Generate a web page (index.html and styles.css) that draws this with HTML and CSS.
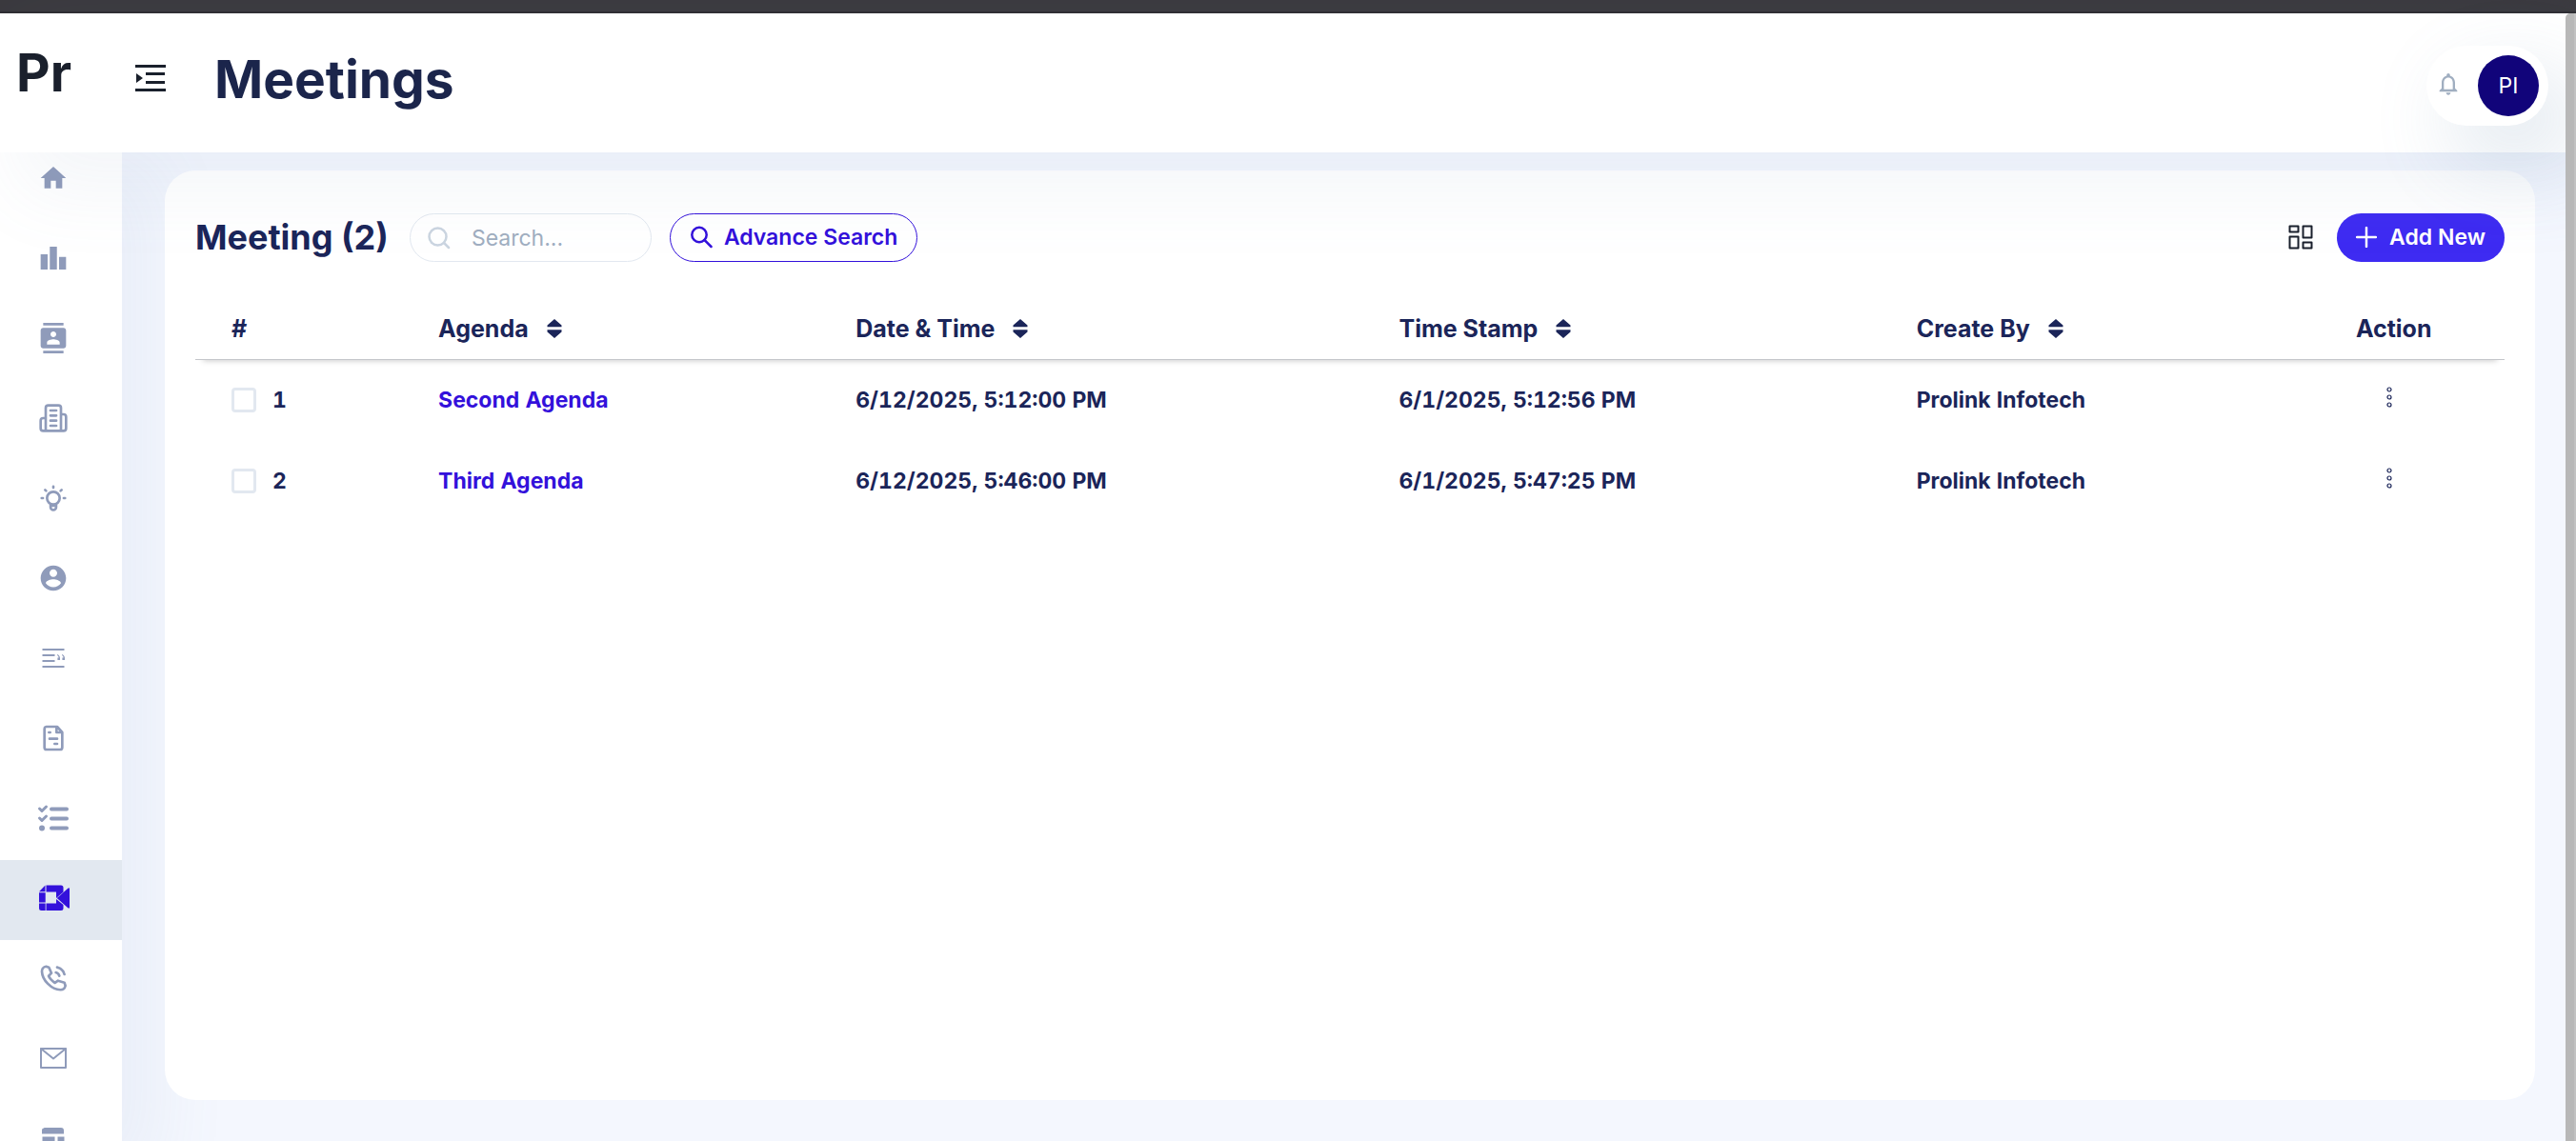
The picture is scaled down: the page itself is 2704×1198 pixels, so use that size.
FILE: index.html
```
<!DOCTYPE html>
<html lang="en">
<head>
<meta charset="utf-8">
<title>Meetings</title>
<meta name="viewport" content="width=device-width, initial-scale=1">
<link rel="stylesheet" href="styles.css">
</head>
<body>
<svg class="sprite" aria-hidden="true">
  <symbol id="sort" viewBox="0 0 16 20"><path d="M8 0 15.500 6.500V8.300H.5V6.500ZM8 20 15.500 13.500V11.200H.5v2.300Z"/></symbol>
  <symbol id="dots" viewBox="0 0 6 22"><g fill="none" stroke="currentColor" stroke-width="1.2"><circle cx="3" cy="3" r="2"/><circle cx="3" cy="11" r="2"/><circle cx="3" cy="19" r="2"/></g></symbol>
</svg>
<div class="window-edge"></div>
<header class="topbar">
  <a class="brand" href="#">Pr</a>
  <button class="menu-toggle" type="button" aria-label="Toggle menu">
    <svg width="32" height="28" viewBox="0 0 32 28"><path d="M0 0h32v3H0zM11 8h20v3H11zM11 17h20v3H11zM0 25h32v3H0zM1 9l7 5-7 5z"/></svg>
  </button>
  <h1>Meetings</h1>
  <div class="account">
    <button class="bell" type="button" aria-label="Notifications">
      <svg width="28" height="28" viewBox="0 0 24 24"><path d="M12 22c1.100 0 2-.9 2-2h-4c0 1.100.9 2 2 2zm6-6v-5c0-3.070-1.630-5.640-4.500-6.320V4c0-.83-.67-1.500-1.500-1.500s-1.500.67-1.500 1.500v.68C7.640 5.360 6 7.920 6 11v5l-2 2v1h16v-1l-2-2zm-2 1H8v-6c0-2.480 1.510-4.500 4-4.500s4 2.020 4 4.500v6z"/></svg>
    </button>
    <button class="avatar" type="button">PI</button>
  </div>
</header>
<div class="shell">
  <nav class="sidebar" aria-label="Main">
    <a href="#" aria-label="Home"><svg viewBox="0 0 24 24"><path d="M10 20v-6h4v6h5v-8h3L12 3 2 12h3v8z"/></svg></a>
    <a href="#" aria-label="Reports"><svg viewBox="0 0 24 24"><path d="M2 9h5.500v12H2zM9.200 3h5.600v18H9.200zM16.500 11H22v10h-5.500z"/></svg></a>
    <a href="#" aria-label="Contacts"><svg viewBox="0 0 24 24"><path d="M20 0H4v2h16V0zM4 24h16v-2H4v2zM20 4H4c-1.100 0-2 .9-2 2v12c0 1.100.9 2 2 2h16c1.100 0 2-.9 2-2V6c0-1.100-.9-2-2-2zm-8 2.750c1.240 0 2.250 1.010 2.250 2.250s-1.010 2.250-2.250 2.250S9.750 10.240 9.750 9 10.760 6.750 12 6.750zM17 17H7v-1.500c0-1.670 3.330-2.500 5-2.500s5 .83 5 2.500V17z"/></svg></a>
    <a href="#" aria-label="Properties"><svg viewBox="0 0 24 24" class="line"><path d="M6 22V4a2 2 0 0 1 2-2h8a2 2 0 0 1 2 2v18ZM6 12H4a2 2 0 0 0-2 2v6a2 2 0 0 0 2 2h2M18 9h2a2 2 0 0 1 2 2v9a2 2 0 0 1-2 2h-2M9.700 6h4.600M9.700 10h4.600M9.700 14h4.600M9.700 18h4.600"/></svg></a>
    <a href="#" aria-label="Opportunities"><svg viewBox="0 0 24 24" class="line"><circle cx="12" cy="12" r="5"/><path d="M9.800 17v2.200a2.200 2.200 0 0 0 4.400 0V17M9.800 18h4.400M12 2.800v1M2.800 12h1M20.200 12h1M5.500 5.500l.8.8M18.500 5.500l-.8.800"/></svg></a>
    <a href="#" aria-label="Accounts"><svg viewBox="0 0 24 24"><path d="M12 2C6.480 2 2 6.480 2 12s4.480 10 10 10 10-4.480 10-10S17.520 2 12 2zm0 3c1.660 0 3 1.340 3 3s-1.340 3-3 3-3-1.340-3-3 1.340-3 3-3zm0 14.200c-2.500 0-4.710-1.280-6-3.220.03-1.990 4-3.080 6-3.080 1.990 0 5.970 1.090 6 3.080-1.290 1.940-3.500 3.220-6 3.220z"/></svg></a>
    <a href="#" aria-label="Quotes"><svg viewBox="0 0 32 32"><path d="M4.500 6h23v2h-23zM4.500 12h13v2h-13zM4.500 18h13v2h-13zM4.500 24h23v2h-23z"/><path d="M20 12q3.500 1 3 6h-2.600v-2.500h1.200q0-1.800-1.600-2.400zM25 12q3.500 1 3 6h-2.600v-2.500h1.200q0-1.800-1.600-2.400z"/></svg></a>
    <a href="#" aria-label="Invoices"><svg viewBox="0 0 24 24" class="line"><path d="M15 3H6.500A1.700 1.700 0 0 0 5 4.700v14.600A1.700 1.700 0 0 0 6.700 21h10.600a1.700 1.700 0 0 0 1.700-1.700V7.500ZM14.500 3v4.500H19M8.500 7.500h1M9 12.500h6M13 16.500h2"/></svg></a>
    <a href="#" aria-label="Tasks"><svg viewBox="0 0 32 32" class="tasks"><path d="M1.500 6 4 8.500 8.500 4M1.500 16 4 18.500 8.500 14" stroke-width="3"/><path d="M14 6.500h16M14 16.500h16M14 26.500h16" stroke-width="4"/><circle cx="4" cy="26.500" r="1.500" stroke-width="3"/></svg></a>
    <a href="#" aria-label="Meetings" class="active" aria-current="page"><svg viewBox="0 0 32 32"><path d="M7.500 2.500v6.800H1zM8.500 2.500H24a2.500 2.500 0 0 1 2.500 2.500v4.500L19 16V9.500H8.500zM1 10.300h6.700v10.200H1zM1 21.500h6.700V29H3.500A2.500 2.500 0 0 1 1 26.500zM8.500 21.500H19V17l7.500 6v3.500A2.500 2.500 0 0 1 24 29H8.500zM19.800 16 31 6q2-1.500 2 .5v19q0 2-2 .5z"/></svg></a>
    <a href="#" aria-label="Calls"><svg viewBox="0 0 24 24" class="line"><path d="M8.500 3.500 10.500 8 8.300 10.300c.5 1.500 3.200 4.500 5 5.400L15.700 14l5 1.500.8 2.500c-.5 2-2 3.200-3.800 3.200C10.300 21 3.300 13.500 3 6.800 3 4.800 4.200 3 6.300 2.800ZM14 7.500c1.500.4 2.400 1.300 2.700 2.700M15 3.500c3 .7 5 2.700 5.700 5.500"/></svg></a>
    <a href="#" aria-label="Email"><svg viewBox="0 0 32 32" class="line"><path d="M3 6h26v20H3ZM3 6l13 10.500L29 6"/></svg></a>
    <a href="#" aria-label="Documents"><svg viewBox="0 0 32 32"><path d="M6.500 5h17.500a3 3 0 0 1 3 3v3.500h-23V7.500a2 2 0 0 1 2-2zM4.500 14.500h13v13H6.500a2 2 0 0 1-2-2zM20.500 14.500h7v11a2 2 0 0 1-2 2h-5z"/></svg></a>
  </nav>
  <main class="card">
    <div class="toolbar">
      <h2>Meeting (2)</h2>
      <label class="search">
        <svg width="24" height="24" viewBox="0 0 24 24" class="glass"><circle cx="10.500" cy="10.500" r="9"/><path d="m17 17 5 5"/></svg>
        <input type="text" placeholder="Search..." aria-label="Search meetings">
      </label>
      <button class="outline" type="button">
        <svg width="24" height="24" viewBox="0 0 24 24" class="glass"><circle cx="10" cy="9.500" r="7.700"/><path d="m15.500 15 7 7"/></svg>
        Advance Search
      </button>
      <button class="layout" type="button" aria-label="Manage columns">
        <svg width="26" height="26" viewBox="0 0 26 26"><path d="M1.500 1.500h9v6h-9zM15.500 1.500h9v12h-9zM1.500 12.500h9v12h-9zM15.500 18.500h9v6h-9z"/></svg>
      </button>
      <button class="primary" type="button">
        <svg width="22" height="22" viewBox="0 0 22 22"><path d="M11 1v20M1 11h20"/></svg>
        Add New
      </button>
    </div>
    <table>
      <colgroup><col class="c-num"><col class="c-agenda"><col class="c-date"><col class="c-stamp"><col class="c-by"><col class="c-action"></colgroup>
      <thead>
        <tr>
          <th scope="col">#</th>
          <th scope="col"><span class="head">Agenda <svg><use href="#sort"/></svg></span></th>
          <th scope="col"><span class="head">Date &amp; Time <svg><use href="#sort"/></svg></span></th>
          <th scope="col"><span class="head">Time Stamp <svg><use href="#sort"/></svg></span></th>
          <th scope="col"><span class="head">Create By <svg><use href="#sort"/></svg></span></th>
          <th scope="col">Action</th>
        </tr>
      </thead>
      <tbody>
        <tr>
          <td><label class="pick"><input type="checkbox">1</label></td>
          <td><a href="#">Second Agenda</a></td>
          <td>6/12/2025, 5:12:00 PM</td>
          <td>6/1/2025, 5:12:56 PM</td>
          <td>Prolink Infotech</td>
          <td><button class="more" type="button" aria-label="Actions for Second Agenda"><svg><use href="#dots"/></svg></button></td>
        </tr>
        <tr>
          <td><label class="pick"><input type="checkbox">2</label></td>
          <td><a href="#">Third Agenda</a></td>
          <td>6/12/2025, 5:46:00 PM</td>
          <td>6/1/2025, 5:47:25 PM</td>
          <td>Prolink Infotech</td>
          <td><button class="more" type="button" aria-label="Actions for Third Agenda"><svg><use href="#dots"/></svg></button></td>
        </tr>
      </tbody>
    </table>
  </main>
</div>
<div class="scroll-thumb"></div>
</body>
</html>
```
FILE: styles.css
```
* {
  box-sizing: border-box;
}

body {
  margin: 0;
  height: 100vh;
  overflow: hidden;
  display: flex;
  flex-direction: column;
  background: #f4f7fe;
  color: #1b2559;
  font-family: Inter, "Liberation Sans", sans-serif;
  font-size: 23px;
}

button {
  margin: 0;
  padding: 0;
  border: 0;
  background: none;
  color: inherit;
  font: inherit;
  display: flex;
  align-items: center;
}

a {
  text-decoration: none;
}

svg {
  display: block;
  flex: none;
  fill: currentColor;
}

h1,
h2 {
  margin: 0;
  font-weight: 700;
}

.sprite {
  position: absolute;
  width: 0;
  height: 0;
}

.window-edge {
  flex: none;
  height: 14px;
  background: #3b3a3f;
  border-bottom: 2px solid #2f2e33;
}

.topbar {
  flex: none;
  position: relative;
  z-index: 1;
  height: 146px;
  padding: 0 29px 0 17px;
  display: flex;
  align-items: center;
  background: #fff;
  box-shadow: 28px 34px 80px 8px rgba(112, 144, 176, 0.08);
}

.brand {
  width: 125px;
  padding-bottom: 22px;
  color: #1a202c;
  font-size: 55px;
  font-weight: 700;
  line-height: 68px;
}

.menu-toggle {
  margin-bottom: 10px;
  color: #1a202c;
}

.topbar h1 {
  margin-left: 51px;
  padding-bottom: 8px;
  color: #1b254b;
  font-size: 55px;
  line-height: 68px;
}

.account {
  margin-top: 5px;
  margin-left: auto;
  width: 128px;
  height: 84px;
  padding: 0 10px 0 9px;
  display: flex;
  align-items: center;
  justify-content: space-between;
  border-radius: 42px;
  background: #fff;
  box-shadow: 28px 34px 80px 8px rgba(112, 144, 176, 0.18);
}

.bell {
  padding-bottom: 4px;
  color: #a0aec0;
}

.avatar {
  width: 64px;
  height: 64px;
  justify-content: center;
  border-radius: 50%;
  background: #11047a;
  color: #fff;
  font-weight: 400;
}

.shell {
  flex: 1;
  min-height: 0;
  display: flex;
}

.sidebar {
  flex: none;
  width: 128px;
  margin-top: -13px;
  background: #fff;
  color: #8f9bba;
  box-shadow: 28px 34px 80px 8px rgba(112, 144, 176, 0.08);
}

.sidebar a {
  height: 84px;
  padding: 0 0 4px 40px;
  display: flex;
  align-items: center;
  color: inherit;
}

.sidebar svg {
  width: 32px;
  height: 32px;
  overflow: visible;
}

.sidebar .active {
  background: #e2e8f0;
  color: #3311db;
}

.line,
.tasks {
  fill: none;
  stroke: currentColor;
  stroke-width: 2;
  stroke-linecap: round;
  stroke-linejoin: round;
}

.card {
  position: relative;
  flex: 1;
  min-width: 0;
  margin: 19px 43px 43px 45px;
  padding: 45px 32px;
  border-radius: 32px;
  background: #fff;
}

.toolbar {
  display: flex;
  align-items: center;
  height: 51px;
}

.toolbar h2 {
  padding-bottom: 2px;
  font-size: 36px;
  line-height: 44px;
}

.search {
  width: 254px;
  height: 51px;
  margin-left: 22px;
  padding: 0 18px;
  display: flex;
  align-items: center;
  gap: 22px;
  border: 1px solid #e2e8f0;
  border-radius: 26px;
  color: #cbd5e0;
}

.search input {
  min-width: 0;
  flex: 1;
  padding: 0;
  border: 0;
  outline: 0;
  background: none;
  color: #1b2559;
  font: inherit;
}

.search input::placeholder {
  color: #a0aec0;
  opacity: 1;
}

.glass {
  fill: none;
  stroke: currentColor;
  stroke-width: 2.5;
  stroke-linecap: round;
}

.outline,
.primary {
  height: 51px;
  padding: 0 20px 2px;
  border-radius: 26px;
  font-weight: 600;
}

.outline {
  margin-left: 19px;
  gap: 12px;
  border: 1px solid #3311db;
  color: #3311db;
}

.layout {
  margin-left: auto;
  padding-bottom: 2px;
  color: #1a202c;
}

.layout svg {
  fill: none;
  stroke: currentColor;
  stroke-width: 2;
  stroke-linejoin: round;
}

.primary {
  margin-left: 25px;
  gap: 13px;
  background: #3e2bf2;
  color: #fff;
}

.primary svg {
  stroke: currentColor;
  stroke-width: 2.5;
  stroke-linecap: round;
}

table {
  width: 100%;
  margin-top: 38px;
  table-layout: fixed;
  border-collapse: separate;
  border-spacing: 0;
}

.c-num { width: 217px; }
.c-agenda { width: 438px; }
.c-date { width: 570px; }
.c-stamp { width: 543px; }
.c-by { width: 461px; }
.c-action { width: 194px; }

thead {
  box-shadow: 0 9px 6px -8px rgba(0, 0, 0, 0.2);
}

th {
  height: 65px;
  padding: 0 0 0 38px;
  border-bottom: 1px solid #c4c6ca;
  background: #fff;
  text-align: left;
  font-size: 25px;
  font-weight: 700;
}

.head {
  display: flex;
  align-items: center;
  gap: 19px;
}

.head svg {
  width: 16px;
  height: 20px;
}

td {
  height: 85px;
  padding: 0 0 2px 38px;
  font-weight: 700;
  font-variant-numeric: tabular-nums;
}

td a {
  color: #3311db;
}

.pick {
  display: flex;
  align-items: center;
  gap: 17px;
}

.pick input {
  appearance: none;
  width: 26px;
  height: 26px;
  margin: 0;
  border: 3px solid #e2e8f0;
  border-radius: 4px;
}

.more {
  margin-left: 32px;
  padding-bottom: 6px;
}

.more svg {
  width: 6px;
  height: 22px;
}

.scroll-thumb {
  position: fixed;
  z-index: 2;
  top: 14px;
  right: 0;
  bottom: 0;
  width: 11px;
  border-right: 2px solid #c2c2c2;
  border-radius: 5px 0 0 0;
  background: #b8b8b8;
}
```
